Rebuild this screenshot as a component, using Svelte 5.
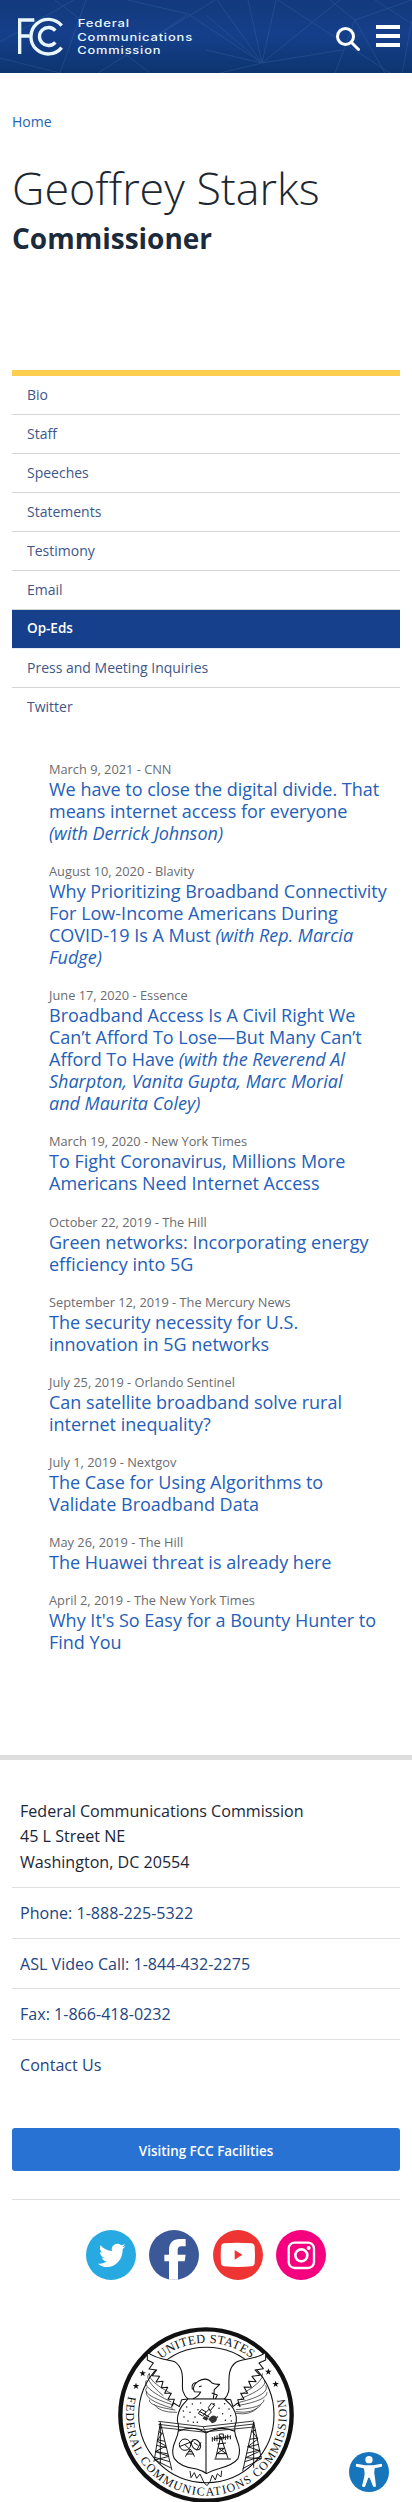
<script>
  const nav = ['Bio', 'Staff', 'Speeches', 'Statements', 'Testimony', 'Email', 'Op-Eds', 'Press and Meeting Inquiries', 'Twitter'];
  const active = 'Op-Eds';
  const articles = [
    { meta: 'March 9, 2021 - CNN', title: ['We have to close the digital divide. That', 'means internet access for everyone'], by: ['(with Derrick Johnson)'], wrap: true },
    { meta: 'August 10, 2020 - Blavity', title: ['Why Prioritizing Broadband Connectivity', 'For Low-Income Americans During', 'COVID-19 Is A Must'], by: ['(with Rep. Marcia', 'Fudge)'] },
    { meta: 'June 17, 2020 - Essence', title: ['Broadband Access Is A Civil Right We', 'Can’t Afford To Lose—But Many Can’t', 'Afford To Have'], by: ['(with the Reverend Al', 'Sharpton, Vanita Gupta, Marc Morial', 'and Maurita Coley)'] },
    { meta: 'March 19, 2020 - New York Times', title: ['To Fight Coronavirus, Millions More', 'Americans Need Internet Access'] },
    { meta: 'October 22, 2019 - The Hill', title: ['Green networks: Incorporating energy', 'efficiency into 5G'] },
    { meta: 'September 12, 2019 - The Mercury News', title: ['The security necessity for U.S.', 'innovation in 5G networks'] },
    { meta: 'July 25, 2019 - Orlando Sentinel', title: ['Can satellite broadband solve rural', 'internet inequality?'] },
    { meta: 'July 1, 2019 - Nextgov', title: ['The Case for Using Algorithms to', 'Validate Broadband Data'] },
    { meta: 'May 26, 2019 - The Hill', title: ['The Huawei threat is already here'] },
    { meta: 'April 2, 2019 - The New York Times', title: ["Why It's So Easy for a Bounty Hunter to", 'Find You'] }
  ];
  const contacts = ['Phone: 1-888-225-5322', 'ASL Video Call: 1-844-432-2275', 'Fax: 1-866-418-0232', 'Contact Us'];
  const dots = [[258,292],[275,283],[292,300],[268,308],[250,322],[283,322],[300,280],[262,334],[340,282],[355,296],[372,282],[385,298],[366,312],[350,322],[390,318],[374,332],[248,304],[290,338],[392,334],[278,338]];
  const star = 'M0-10 2.5-3H10L4 1.5 6 9 0 4.500-6 9-4 1.500-10-3H-2.500Z';
  const stars = [[126, 191], [106, 229], [503, 186], [525, 223]];
</script>

<div class="page">
  <header>
    <svg class="web" viewBox="0 0 412 73" aria-hidden="true">
      <path d="M0 42 74 0M55 0 150 73M150 40 98 73M150 40 188 14 128 0M150 40 215 0M188 14 262 63 217 0M206 15 262 63 248 0M262 63 206 50M262 63 276 0M262 63 340 0M262 63 220 73M262 63 342 50M278 0 390 73M335 73 355 20 330 0M355 20 385 73M355 20 412 0M375 0 412 24M402 73 412 20M0 58 60 73 86 0" />
    </svg>
    <svg class="logo" viewBox="50 48 535 120" role="img" aria-label="FCC">
      <g class="mark">
        <path d="M102 60H58V162M58 108H88" />
        <path d="M184 77A52 52 0 1 0 184 143" />
        <path d="M165 92A27 27 0 1 0 165 127" />
      </g>
      <text x="232" y="82" textLength="157" lengthAdjust="spacingAndGlyphs">Federal</text>
      <text x="231" y="122" textLength="347" lengthAdjust="spacingAndGlyphs">Communications</text>
      <text x="231" y="163" textLength="252" lengthAdjust="spacingAndGlyphs">Commission</text>
    </svg>
    <div class="tools">
      <svg class="search" viewBox="0 0 26 26"><circle cx="10.500" cy="10.500" r="8" /><path d="m16.500 16.500 7 7" /></svg>
      <div class="burger"><i></i><i></i><i></i></div>
    </div>
  </header>

  <main>
    <a class="crumb" href="#home">Home</a>
    <h1>Geoffrey Starks</h1>
    <h2>Commissioner</h2>
    <nav>
      {#each nav as item}
        <a href="#top" class:active={item === active}>{item}</a>
      {/each}
    </nav>
    <section class="articles">
      {#each articles as a}
        <article>
          <p>{a.meta}</p>
          <h3>{#each a.title as line, i}{#if i}<br />{/if}{line}{/each}{#if a.wrap}<br />{/if}{#if a.by}{' '}<em>{#each a.by as line, i}{#if i}<br />{/if}{line}{/each}</em>{/if}</h3>
        </article>
      {/each}
    </section>
  </main>

  <footer>
    <address>Federal Communications Commission<br />45 L Street NE<br />Washington, DC 20554</address>
    {#each contacts as c}
      <a class="contact" href="#contact">{c}</a>
    {/each}
    <a class="button" href="#visit">Visiting FCC Facilities</a>
    <div class="social">
      <svg viewBox="0 0 150 150">
        <circle cx="75" cy="75" r="75" fill="#27aae1" />
        <path fill="#fff" d="M36 101c11 1 19-1 27-7-8 0-13-5-15-11h7c-9-3-13-9-13-17 2 1 4 2 7 2-8-6-9-14-5-22 9 11 20 16 34 17-3-13 6-22 16-22 5 0 9 2 12 5 4-1 7-2 10-4-1 4-3 6-7 9 3 0 6-1 9-3-2 4-4 6-8 9 1 31-20 54-47 54-10 0-19-3-27-10Z" />
      </svg>
      <svg viewBox="0 0 150 150">
        <circle cx="75" cy="75" r="75" fill="#3b5998" />
        <path fill="#fff" d="M60 149V94H46V74h14V60c0-22 13-33 32-33h18v22H98c-9 0-12 4-12 12v13h24l-3 20H87v55Z" />
      </svg>
      <svg viewBox="0 0 150 150">
        <circle cx="75" cy="75" r="75" fill="#ee3533" />
        <path fill="#fff" d="M34 40q40-3 81 0 9 1 10 10 2 25 0 50-1 8-10 9-41 4-81 0-9-1-10-9-2-25 0-50 1-9 10-10Z" />
        <path fill="#ee3533" d="m65 60 23 14-23 15Z" />
      </svg>
      <svg viewBox="0 0 150 150">
        <circle cx="75" cy="75" r="75" fill="#f5007e" />
        <g fill="none" stroke="#fff" stroke-width="7"><rect x="38" y="38" width="76" height="76" rx="18" /><circle cx="76" cy="76" r="18" stroke-width="8" /></g>
        <circle cx="98" cy="54" r="6" fill="#fff" />
      </svg>
    </div>

    <svg class="seal" viewBox="52 52 528 528" role="img" aria-label="Seal">
      <defs>
        <path id="arc-top" d="M181 148A216 216 0 0 1 460 153" />
        <path id="arc-base" d="M83 259A241 241 0 1 0 551 259" />
      </defs>
      <g class="ink">
        <circle cx="316" cy="316" r="257" stroke-width="13" />
        <circle cx="317" cy="316" r="203" />
        <path class="wing" d="M140 128C170 150 205 150 222 156 258 181 240 225 247 245Q252 260 262 268L243 270 236 291 219 280 213 291 221 269 202 269 212 251 192 251 201 233 182 234 187 215 166 217 177 200 155 198 168 181 145 178 158 160 140 151Z" />
        <path class="wing" d="M495 128C470 150 430 145 407 157 375 180 388 222 384 245Q380 260 371 268L390 270 397 291 411 280 418 291 411 270 430 269 420 251 441 251 430 232 452 233 444 215 466 216 454 200 478 197 463 181 488 177 475 160 495 151Z" />
        <path d="M146 191Q140 213 210 251M146 191Q127 208 188 258M137 212Q122 234 212 277M139 233Q117 254 218 286M138 245Q128 270 216 296M146 270Q143 289 224 301M161 284Q175 309 229 308M485 191Q492 215 424 253M492 212Q500 235 420 267M495 227Q510 255 416 278M499 248Q501 272 410 288M490 270Q488 295 406 300M480 287Q455 314 405 306M470 294Q449 318 406 311" stroke-width="2" />
        <path d="M260 269H370M277 267Q292 262 300 247L281 246 278 238Q279 223 294 214 318 200 334 220 344 225 357 224L341 240 338 268M275 239Q270 219 290 218M295 231 303 229M333 250 350 256 344 268" />
        <path d="M245 287Q230 308 230 333 240 360 224 393 210 425 221 447 241 474 288 478 306 483 317 492 332 482 354 477 398 466 412 447 422 421 410 394 396 361 407 335 409 307 389 285L372 268H262ZM232 365Q280 344 316 370 361 345 402 365M316 370V490" fill="#fff" />
        <path d="M173 335 308 351 460 334M173 344 308 360 460 343M175 353 308 367 460 352M307 350 316 370" stroke-width="2.500" />
        <g stroke-width="2.800">
          <path d="M179 339 160 456M179 339 214 482M179 339V462M174 366 186 372M169 390 193 395M167 407 197 414M164 425 202 433M162 443 207 456M185 370 169 394 196 409 164 426 205 440 163 451 211 475M459 337 426 485M459 337 482 447M459 337V474M453 365 466 361M447 389 471 385M441 412 474 404M437 431 478 421M432 456 483 440M454 365 472 388 441 411 479 424 435 444 482 447 426 477" />
          <path d="M268 484 271 504 281 489 288 506 298 493 310 519 319 528 328 516 335 496 344 511 350 492 361 502 363 483" />
        </g>
        <g stroke-width="3">
          <circle cx="253" cy="405" r="17" /><ellipse cx="286" cy="405" rx="12" ry="17" transform="rotate(-35 286 405)" />
          <path d="M236 411 278 394M253 405 269 421M269 418 254 441M269 418 282 441M257 433H280M263 426H275M288 422 301 398M293 408 280 399" />
          <path d="M345 446 360 380 382 446M341 448H391M354 416H371M349 432H377M354 416 377 432M371 416 349 432M338 388 387 381M335 382V396M342 380V394M349 377V395M374 377V391M381 375V389M389 377V389M350 403 376 400M356 373H368V388H356Z" />
        </g>
        <path d="M296 305 326 322M293 311 303 299 316 307 306 319ZM323 294 332 281 342 286 329 303ZM312 312 325 299 332 307 319 321Z" stroke-width="3" />
        <path class="solid" d="M323 329Q337 309 349 323 350 339 334 341ZM310 319 324 324 318 333 306 327Z" />
      </g>
      {#each dots as [x, y]}<circle cx={x} cy={y} r="2.200" />{/each}
      {#each stars as [x, y]}<path d={star} transform={`translate(${x} ${y})`} />{/each}
      <text font-size="37"><textPath href="#arc-top" textLength="292">UNITED STATES</textPath></text>
      <text font-size="36"><textPath href="#arc-base" textLength="865">FEDERAL COMMUNICATIONS COMMISSION</textPath></text>
    </svg>
  </footer>

  <button class="access" aria-label="Accessibility">
    <svg viewBox="0 0 120 120">
      <circle cx="60" cy="60" r="60" fill="#1775bb" />
      <circle cx="60" cy="23" r="11" fill="#fff" />
      <path fill="#fff" d="M22 35 49 40H73L98 35Q101 39 98 44L77 49Q74 62 78 78L81 103Q77 107 72 103L62 77H58L48 104Q42 107 39 102L45 78Q49 61 44 49L22 44Q18 39 22 35Z" />
    </svg>
  </button>
</div>

<style>
  :global(body) { background: #fff; }
  .page { position: relative; width: 412px; height: 2502px; overflow: hidden; font-family: "Open Sans", sans-serif; box-sizing: border-box; background: #fff; }
  .page *, .page { box-sizing: border-box; }
  a { text-decoration: none; }
  h1, h2, h3, p { margin: 0; }
  header { position: relative; height: 73px; display: flex; justify-content: space-between; align-items: flex-start; padding: 16px 12px 0 16.7px; background: linear-gradient(#123a7c, #153f8b 48%, #0c356f); }
  .web { position: absolute; inset: 0; width: 412px; height: 73px; fill: none; stroke: #5784bd; stroke-width: 1; opacity: .22; }
  .logo { position: relative; width: 178.300px; height: 40px; fill: #e9f8ff; font: 500 32px Inter, sans-serif; letter-spacing: 2px; }
  .mark { fill: none; stroke: #e9f8ff; stroke-width: 10; }
  .tools { position: relative; display: flex; gap: 15px; padding-top: 9px; }
  .search { width: 26px; height: 26px; fill: none; stroke: #fff; stroke-width: 3; stroke-linecap: round; margin-top: 1px; }
  .burger { width: 24px; display: flex; flex-direction: column; gap: 5px; }
  .burger i { height: 4px; background: #fff; }
  main { padding: 0 12px; }
  .crumb { display: block; margin-top: 38px; font-size: 14px; line-height: 22px; color: #2464b4; }
  h1 { margin-top: 22.500px; font-size: 44.800px; line-height: 64px; font-weight: 300; color: #1d2731; white-space: nowrap; }
  h2 { font-size: 28px; line-height: 36px; font-weight: 700; color: #1b2b3b; }
  nav { margin-top: 114.500px; border-top: 6px solid #ffce4f; }
  nav a { display: block; height: 39px; padding-left: 15px; line-height: 37px; font-size: 14px; color: #3e5688; border-bottom: 1px solid #d2d4d8; }
  nav a:last-child { border-bottom: 0; }
  nav .active { background: #163f8c; background-clip: padding-box; border-color: #e8edf5; color: #fff; font-weight: 600; font-size: 13.500px; }
  .articles { padding: 33px 0 0 37px; }
  article { margin-bottom: 18.130px; }
  article p { font-size: 12.800px; line-height: 18px; color: #6a6c70; }
  h3 { font-size: 18px; line-height: 22px; font-weight: 400; color: #2460b8; white-space: nowrap; }
  footer { margin-top: 101.800px; border-top: 5px solid #dedede; padding: 39px 12px 0; }
  address { font-style: normal; font-size: 16.080px; line-height: 25.400px; color: #1b2638; padding: 0 8px 11.800px; }
  .contact { display: block; height: 50.600px; padding: 0 8px; line-height: 50px; font-size: 16.080px; color: #234580; border-top: 1px solid #dedfe2; }
  .button { display: block; height: 43px; margin-top: 38.600px; border-radius: 3px; background: #2872d3; color: #fff; text-align: center; font-weight: 600; font-size: 13.400px; line-height: 46px; }
  .social { display: flex; justify-content: center; gap: 13.300px; margin-top: 28px; padding: 30px 0 0; border-top: 1px solid #dedede; }
  .social svg { width: 50px; height: 50px; }
  .seal { display: block; width: 176px; height: 176px; margin: 47px auto 0; font-family: "Liberation Serif", serif; fill: #111; }
  .ink { fill: none; stroke: #111; stroke-width: 3.200; stroke-linejoin: round; }
  .wing { fill: #fff; }
  .solid { fill: #333; stroke: none; }
  .access { position: absolute; left: 349px; top: 2452px; width: 40px; height: 40px; padding: 0; border: 0; background: none; }
  .access svg { display: block; width: 40px; height: 40px; }
</style>
